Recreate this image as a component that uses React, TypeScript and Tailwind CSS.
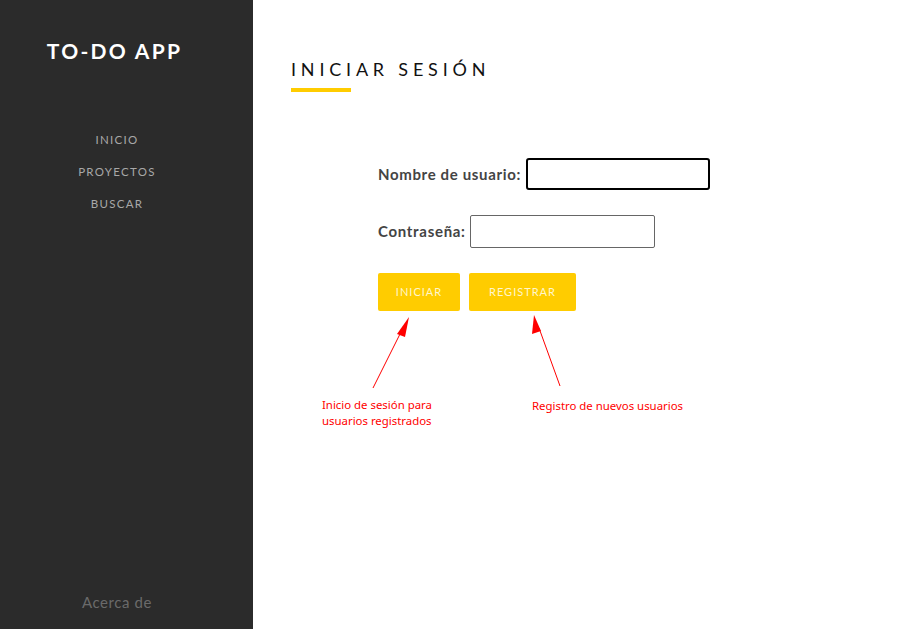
import React from "react";

const sans = { fontFamily: "Lato, 'Open Sans', sans-serif" };
const note = { fontFamily: "'Noto Sans', sans-serif" };

function Sidebar() {
  return (
    <aside className="w-[253px] shrink-0 bg-[#2b2b2b] flex flex-col items-center pr-[24px]" style={sans}>
      <h1 className="mt-[35px] text-[21px] font-bold tracking-[2.3px] text-white">TO-DO APP</h1>
      <nav className="ml-[5px] mt-[64px] flex flex-col items-center gap-[15px] text-[11.5px] tracking-[1.3px] text-[#a8a8a8]">
        <a>INICIO</a>
        <a>PROYECTOS</a>
        <a>BUSCAR</a>
      </nav>
      <div className="ml-[5px] mt-auto mb-[16px] text-[15px] tracking-[0.6px] text-[#6a6a6a]">Acerca de</div>
    </aside>
  );
}

function Annotations() {
  return (
    <>
      <svg className="absolute left-0 top-0 pointer-events-none" width="909" height="629">
        <line x1="373" y1="388" x2="403" y2="328" stroke="#ff0000" strokeWidth="1" />
        <polygon points="409,317 397,334 405,337" fill="#ff0000" />
        <line x1="560" y1="386" x2="539" y2="328" stroke="#ff0000" strokeWidth="1" />
        <polygon points="534,315 532,334 541,331" fill="#ff0000" />
      </svg>
      <div className="absolute left-[322px] top-[397px] text-[11.4px] leading-[16px] text-[#ff0000]" style={note}>
        Inicio de sesión para
        <br />
        usuarios registrados
      </div>
      <div className="absolute left-[532px] top-[398px] text-[11.4px] leading-[16px] text-[#ff0000]" style={note}>
        Registro de nuevos usuarios
      </div>
    </>
  );
}

export default function App() {
  return (
    <div className="relative flex h-[629px] w-[909px] bg-white overflow-hidden">
      <Sidebar />
      <main className="flex-1 pl-[38px] pt-[56px]" style={sans}>
        <h2 className="text-[18px] tracking-[4.8px] text-[#111]">INICIAR SESIÓN</h2>
        <div className="mt-[5px] h-[4px] w-[60px] bg-[#ffcc00]" />
        <form className="ml-[87px] mt-[66px] flex flex-col">
          <label className="flex items-center gap-[5px] text-[15px] font-bold tracking-[0.65px] text-[#444]">
            Nombre de usuario:
            <input className="h-[32px] w-[184px] rounded-[3px] border-2 border-black outline-none" />
          </label>
          <label className="mt-[25px] flex items-center gap-[4px] text-[15px] font-bold tracking-[0.7px] text-[#444]">
            Contraseña:
            <input type="password" className="h-[33px] w-[185px] rounded-[2px] border border-[#666] outline-none" />
          </label>
          <div className="mt-[25px] flex gap-[9px]">
            <button type="button" className="h-[38px] w-[82px] rounded-[2px] bg-[#ffcc00] text-[11px] tracking-[1px] text-[#fff6cc]">
              INICIAR
            </button>
            <button type="button" className="h-[38px] w-[107px] rounded-[2px] bg-[#ffcc00] text-[11px] tracking-[1px] text-[#fff6cc]">
              REGISTRAR
            </button>
          </div>
        </form>
      </main>
      <Annotations />
    </div>
  );
}
